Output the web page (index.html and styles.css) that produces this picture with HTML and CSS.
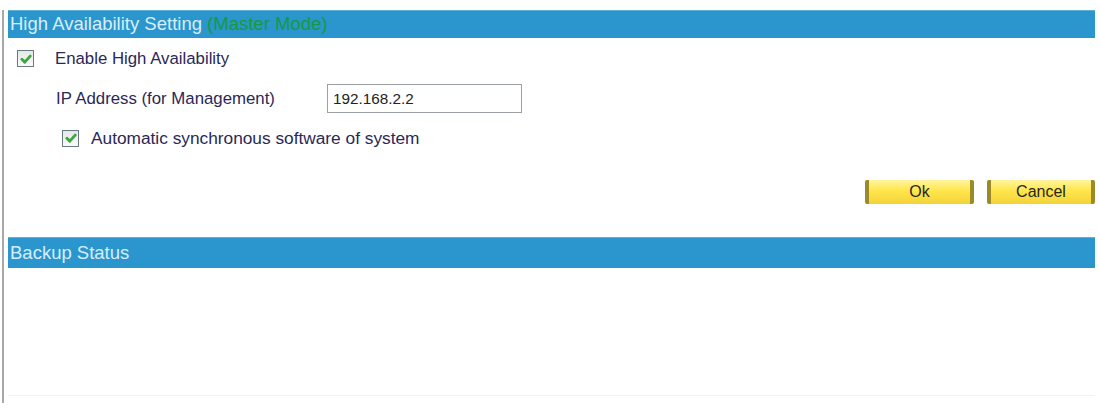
FILE: index.html
```html
<!DOCTYPE html>
<html>
<head>
<meta charset="utf-8">
<link rel="stylesheet" href="styles.css">
</head>
<body>
<div class="page">
  <div class="bar">High Availability Setting <span class="mode">(Master Mode)</span></div>
  <div class="row row1">
    <span class="cb"><svg viewBox="0 0 10 10" width="12" height="12"><path d="M1.6 5.2 L4 7.6 L8.5 2.6" fill="none" stroke="#3ea63e" stroke-width="2.4" stroke-linecap="round" stroke-linejoin="round"/></svg></span>
    <span class="label">Enable High Availability</span>
  </div>
  <div class="row row2">
    <span class="label ip">IP Address (for Management)</span>
    <span class="input">192.168.2.2</span>
  </div>
  <div class="row row3">
    <span class="cb"><svg viewBox="0 0 10 10" width="12" height="12"><path d="M1.6 5.2 L4 7.6 L8.5 2.6" fill="none" stroke="#3ea63e" stroke-width="2.4" stroke-linecap="round" stroke-linejoin="round"/></svg></span>
    <span class="label auto">Automatic synchronous software of system</span>
  </div>
  <div class="buttons">
    <span class="btn ok">Ok</span>
    <span class="btn cancel">Cancel</span>
  </div>
  <div class="bar bar2">Backup Status</div>
  <div class="status-body"></div>
</div>
</body>
</html>
```

FILE: styles.css
```css
html, body {
  margin: 0;
  padding: 0;
  background: #ffffff;
}
body {
  font-family: "Liberation Sans", Arial, sans-serif;
  width: 1100px;
  height: 403px;
  overflow: hidden;
}
.page {
  margin: 10px 5px 0 2px;
  border-left: 2px solid #a8a8a8;
  padding-left: 4px;
  height: 393px;
  box-sizing: border-box;
}
.bar {
  height: 28px;
  background: #2b96cd;
  border-top: 1px solid #5bb0dc;
  box-sizing: border-box;
  color: #d6eefc;
  font-size: 18.5px;
  line-height: 25px;
  padding-left: 2px;
  white-space: nowrap;
}
.mode {
  color: #159a3c;
}
.row {
  display: flex;
  align-items: center;
  color: #2a2858;
  font-size: 16.8px;
  white-space: nowrap;
}
.row1 {
  height: 41px;
  padding-left: 9px;
}
.row2 {
  height: 39px;
  padding-left: 48px;
}
.row3 {
  height: 40px;
  padding-left: 54px;
}
.auto {
  font-size: 17.3px;
}
.cb {
  width: 17px;
  height: 17px;
  border: 1px solid #6a7880;
  background: linear-gradient(#e4e8e8, #fafafa);
  box-sizing: border-box;
  display: flex;
  align-items: center;
  justify-content: center;
  margin-right: 21px;
}
.row3 .cb {
  margin-right: 12px;
}
.ip {
  width: 271px;
}
.input {
  width: 195px;
  height: 29px;
  box-sizing: border-box;
  border: 1px solid #9aa0a6;
  color: #222;
  font-size: 15.3px;
  line-height: 27px;
  padding-left: 5px;
}
.buttons {
  display: flex;
  justify-content: flex-end;
  gap: 13px;
  margin-top: 22px;
  height: 24px;
}
.btn {
  height: 24px;
  box-sizing: border-box;
  border-left: 4px solid #9a8a2a;
  border-right: 4px solid #9a8a2a;
  border-radius: 2px;
  background: linear-gradient(#fff4a0, #ffe64a 45%, #f3d23a);
  color: #262626;
  font-size: 16px;
  line-height: 23px;
  text-align: center;
}
.ok {
  width: 109px;
}
.cancel {
  width: 108px;
}
.bar2 {
  margin-top: 33px;
  height: 31px;
  line-height: 29px;
}
.status-body {
  height: 127px;
  border-bottom: 1px solid #f2f2f2;
}
```
